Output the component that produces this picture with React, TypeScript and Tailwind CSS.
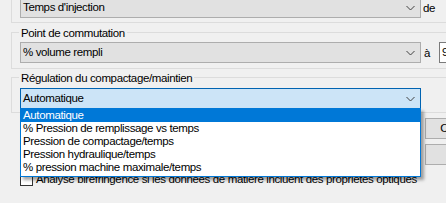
import React from "react";

const font = { fontFamily: '"Liberation Sans", Arial, sans-serif' };

function Chevron() {
  return (
    <svg width="9" height="6" viewBox="0 0 9 6" className="shrink-0">
      <path d="M0.5 1 L4.5 5 L8.5 1" fill="none" stroke="#404040" strokeWidth="1" />
    </svg>
  );
}

function Combo({ value, focused = false }: { value: string; focused?: boolean }) {
  return (
    <div
      className={
        "flex h-[21px] w-[401px] shrink-0 items-center justify-between border pl-[2px] pr-[5px] " +
        (focused ? "border-[#0063b1] bg-[#cce4f7]" : "border-[#adadad] bg-[#e1e1e1]")
      }
    >
      <span className="leading-[19px]">{value}</span>
      <Chevron />
    </div>
  );
}

function Group({ label, children, className }: { label?: string; children: React.ReactNode; className?: string }) {
  return (
    <div className={"relative ml-[11px] w-[460px] border border-[#dcdcdc] pl-[8px] " + (className ?? "")}>
      {label && (
        <span className="absolute left-[7px] top-[-8px] whitespace-nowrap bg-[#f0f0f0] px-[2px] leading-[16px]">
          {label}
        </span>
      )}
      {children}
    </div>
  );
}

const items = [
  "Automatique",
  "% Pression de remplissage vs temps",
  "Pression de compactage/temps",
  "Pression hydraulique/temps",
  "% pression machine maximale/temps",
];

export default function App() {
  return (
    <div
      className="relative h-[203px] w-[446px] overflow-hidden bg-[#f0f0f0] text-[11.5px] tracking-[-0.37px] text-black"
      style={font}
    >
      {/* group 1 (cut at top) */}
      <Group className="mt-[-8px] border-t-0 pb-[4px] pt-[5px]">
        <div className="flex items-center">
          <Combo value="Temps d'injection" />
          <span className="ml-[2px] whitespace-nowrap leading-[16px]">de</span>
        </div>
      </Group>

      {/* group 2 */}
      <Group label="Point de commutation" className="mt-[9px] pb-[5px] pt-[9px]">
        <div className="flex items-center">
          <Combo value="% volume rempli" />
          <span className="w-[18px] shrink-0 pl-[3px] leading-[16px]">à</span>
          <div className="h-[21px] w-[40px] shrink-0 border border-[#7a7a7a] bg-white pl-[2px] leading-[19px]">9</div>
        </div>
      </Group>

      {/* group 3 */}
      <Group label="Régulation du compactage/maintien" className="mt-[8px] pb-[3px] pt-[10px]">
        <Combo value="Automatique" focused />
      </Group>

      <div className="flex justify-end">
        <div className="mr-[-55px] mt-[5px] flex flex-col gap-[5px]">
          <div className="flex h-[21px] w-[76px] items-center justify-center whitespace-nowrap border border-[#adadad] bg-[#e1e1e1]">
            Options...
          </div>
          <div className="flex h-[21px] w-[76px] items-center justify-center whitespace-nowrap border border-[#adadad] bg-[#e1e1e1]">
            Aide
          </div>
        </div>
      </div>

      <div className="ml-[20px] mt-[7px] flex items-center gap-[3px] whitespace-nowrap">
        <div className="h-[13px] w-[13px] shrink-0 border border-[#333333] bg-white" />
        <span className="leading-[14px]">
          Analyse biréfringence si les données de matière incluent des propriétés optiques
        </span>
      </div>

      {/* open dropdown list */}
      <div className="absolute left-[20px] top-[108px] w-[401px] border border-[#0078d7] bg-white pb-[2px] shadow-[3px_3px_3px_rgba(0,0,0,0.35)]">
        {items.map((t, i) => (
          <div
            key={t}
            className={
              "h-[13px] whitespace-nowrap pl-[2px] leading-[13px] " +
              (i === 0 ? "bg-[#0078d7] text-white" : "text-black")
            }
          >
            {t}
          </div>
        ))}
      </div>
    </div>
  );
}
